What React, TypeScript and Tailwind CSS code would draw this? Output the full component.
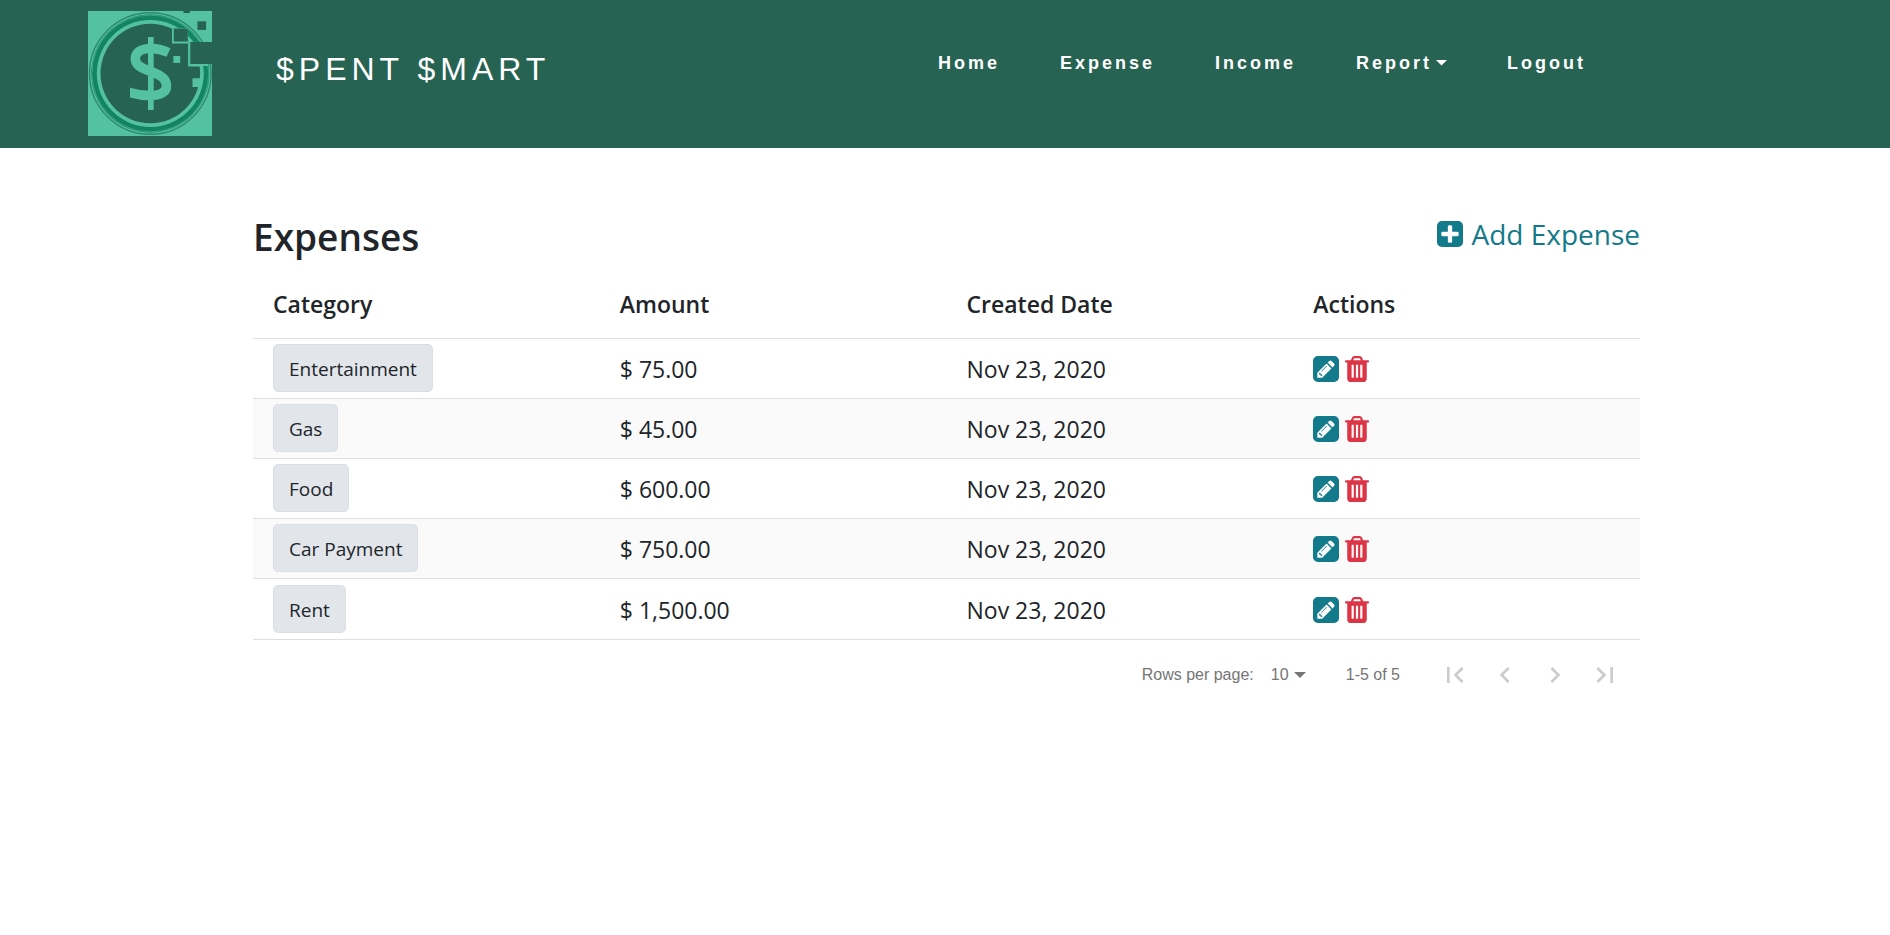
import React from "react";

const rows = [
  { category: "Entertainment", amount: "$ 75.00", date: "Nov 23, 2020" },
  { category: "Gas", amount: "$ 45.00", date: "Nov 23, 2020" },
  { category: "Food", amount: "$ 600.00", date: "Nov 23, 2020" },
  { category: "Car Payment", amount: "$ 750.00", date: "Nov 23, 2020" },
  { category: "Rent", amount: "$ 1,500.00", date: "Nov 23, 2020" },
];

const SQUARE =
  "m256-544v960q0 119-84.5 203.5t-203.5 84.5h-960q-119 0-203.5-84.5t-84.5-203.5v-960q0-119 84.5-203.5t203.5-84.5h960q119 0 203.5 84.5t84.5 203.5z";

function PlusSquare() {
  return (
    <svg viewBox="0 0 1536 1536" className="size-[26px]" fill="currentColor" aria-hidden="true">
      <path
        d={
          "M1280 832v-128q0-26-19-45t-45-19h-320v-320q0-26-19-45t-45-19h-128q-26 0-45 19t-19 45v320h-320q-26 0-45 19t-19 45v128q0 26 19 45t45 19h320v320q0 26 19 45t45 19h128q26 0 45-19t19-45v-320h320q26 0 45-19t19-45z" +
          SQUARE
        }
      />
    </svg>
  );
}

function PencilSquare() {
  return (
    <svg viewBox="0 0 1536 1536" className="size-[26px]" fill="currentColor" aria-hidden="true">
      <path d="M404 980l152 152-52 52h-56v-96h-96v-56zm414-390q14 13-3 30l-291 291q-17 17-30 3-14-13 3-30l291-291q17-17 30-3zm-274 690l544-544-288-288-544 544v288h288zm608-608l92-92q28-28 28-68t-28-68l-152-152q-28-28-68-28t-68 28l-92 92zm384-384v960q0 119-84.5 203.5t-203.5 84.5h-960q-119 0-203.5-84.5t-84.5-203.5v-960q0-119 84.5-203.5t203.5-84.5h960q119 0 203.5 84.5t84.5 203.5z" />
    </svg>
  );
}

function Trash() {
  return (
    <svg viewBox="192 128 1408 1536" className="h-[26px] w-6" fill="currentColor" aria-hidden="true">
      <path d="M704 1376v-704q0-14-9-23t-23-9h-64q-14 0-23 9t-9 23v704q0 14 9 23t23 9h64q14 0 23-9t9-23zm256 0v-704q0-14-9-23t-23-9h-64q-14 0-23 9t-9 23v704q0 14 9 23t23 9h64q14 0 23-9t9-23zm256 0v-704q0-14-9-23t-23-9h-64q-14 0-23 9t-9 23v704q0 14 9 23t23 9h64q14 0 23-9t9-23zm-544-992h448l-48-117q-7-9-17-11h-317q-10 2-17 11zm928 32v64q0 14-9 23t-23 9h-96v948q0 83-47 143.5t-113 60.5h-832q-66 0-113-58.5t-47-141.5v-952h-96q-14 0-23-9t-9-23v-64q0-14 9-23t23-9h309l70-167q15-37 54-63t79-26h320q40 0 79 26t54 63l70 167h309q14 0 23 9t9 23z" />
    </svg>
  );
}

function Logo() {
  return (
    <svg viewBox="0 0 124 125" className="h-[125px] w-[124px]" role="img" aria-label="Spent Smart logo">
      <clipPath id="coin-face">
        <rect x="42" y="20" width="44" height="84" />
      </clipPath>
      <rect width="124" height="125" fill="#54c1a1" />
      <circle cx="62.3" cy="62.5" r="60.8" fill="none" stroke="#2f8a6c" strokeWidth="1.4" />
      <circle cx="62.3" cy="62.5" r="59" fill="#12845f" />
      <circle cx="62.3" cy="62.5" r="58.4" fill="none" stroke="#3aa482" strokeWidth="1" />
      <circle cx="62.3" cy="62.5" r="53.5" fill="#54c1a1" />
      <circle cx="62.3" cy="62.5" r="49.8" fill="#276352" />
      <path
        clipPath="url(#coin-face)"
        d="M80.500 41.500C74 38.500 69 37.500 63 37.500C53 37.500 47.300 41.500 47.300 47.500C47.300 54 53 57 63 60.500C74 64.500 78.500 68.500 78.500 75C78.500 81.500 72 84.500 62 84.500C54 84.500 48 83.500 42 81.500L38 80"
        fill="none"
        stroke="#54c1a1"
        strokeWidth="9.500"
      />
      <rect x="60" y="26" width="5.700" height="73" fill="#54c1a1" />
      <path d="M84 17H100V31H120V55H101.500V32.500H84Z" fill="#54c1a1" />
      <rect x="85.800" y="17.500" width="14" height="13" fill="#276352" />
      <rect x="102.300" y="31" width="21.700" height="22" fill="#276352" />
      <path d="M101 31V54.500H114" fill="none" stroke="#54c1a1" strokeWidth="1.800" />
      <rect x="109.500" y="10.300" width="8.600" height="8.600" fill="#276352" />
      <rect x="95.500" y="0" width="6.500" height="2" fill="#276352" />
      <rect x="85.300" y="45" width="6.900" height="6.900" fill="#54c1a1" />
      <path d="M104.500 67.300H113V72L111 76H104.500Z" fill="#54c1a1" />
    </svg>
  );
}

const pagers = [
  { label: "First page", d: "M18.41 16.59L13.82 12l4.59-4.59L17 6l-6 6 6 6zM6 6h2v12H6z" },
  { label: "Previous page", d: "M15.41 7.41L14 6l-6 6 6 6 1.410-1.410L10.830 12z" },
  { label: "Next page", d: "M10 6L8.590 7.410 13.170 12l-4.580 4.590L10 18l6-6z" },
  { label: "Last page", d: "M5.590 7.410L10.180 12l-4.590 4.590L7 18l6-6-6-6zM16 6h2v12h-2z" },
];

export default function App() {
  return (
    <div className="min-h-screen bg-white font-['Open_Sans','Noto_Sans',sans-serif] text-[#212529]">
      <header className="flex h-[148px] items-start bg-[#276352] pt-[11px] pl-[88px] font-['Liberation_Sans',Arial,sans-serif] text-white">
        <Logo />
        <a href="#home" className="mt-9 ml-16 text-[32px] leading-[44px] tracking-[5px] whitespace-nowrap">
          $PENT $MART
        </a>
        <nav className="mt-10 mr-[304px] ml-auto flex gap-[60px] text-[18px] leading-6 font-bold tracking-[3px]">
          <a href="#home">Home</a>
          <a href="#expense">Expense</a>
          <a href="#income">Income</a>
          <button type="button" className="flex items-center gap-1 font-bold tracking-[3px]">
            Report
            <svg viewBox="0 0 11 6" className="h-[6px] w-[11px]" fill="currentColor" aria-hidden="true">
              <path d="M0 0H11L5.500 5.500Z" />
            </svg>
          </button>
          <a href="#logout">Logout</a>
        </nav>
      </header>

      <main className="pt-[61px] pr-[250px] pl-[253px]">
        <div className="flex items-start justify-between">
          <h1 className="text-[37px] leading-[56px] font-semibold">Expenses</h1>
          <a href="#add" className="flex items-center gap-2 text-[28px] leading-[50px] text-[#127a8a]">
            <PlusSquare />
            Add Expense
          </a>
        </div>

        <table className="mt-[6px] w-full table-fixed border-collapse text-left">
          <thead>
            <tr className="h-[67px] border-b border-[#dfdfdf] text-[23px] leading-8">
              <th className="px-5 font-semibold">Category</th>
              <th className="px-5 font-semibold">Amount</th>
              <th className="px-5 font-semibold">Created Date</th>
              <th className="px-5 font-semibold">Actions</th>
            </tr>
          </thead>
          <tbody>
            {rows.map((row) => (
              <tr
                key={row.category}
                className="h-[60px] border-b border-[#dfdfdf] text-[23px] leading-8 last:h-[61px] even:bg-[#fafafa]"
              >
                <td className="px-5">
                  <span className="flex h-12 w-fit items-center rounded-[5px] border border-[#d9dfe5] bg-[#e2e5ea] px-[15px] pt-[2px] text-[19px]">
                    {row.category}
                  </span>
                </td>
                <td className="px-5 pt-[2px]">{row.amount}</td>
                <td className="px-5 pt-[2px]">{row.date}</td>
                <td className="px-5 pt-[2px]">
                  <div className="flex items-center gap-[6px]">
                    <button type="button" aria-label={"Edit " + row.category} className="text-[#127a8a]">
                      <PencilSquare />
                    </button>
                    <button type="button" aria-label={"Delete " + row.category} className="text-[#dc3545]">
                      <Trash />
                    </button>
                  </div>
                </td>
              </tr>
            ))}
          </tbody>
        </table>

        <div className="flex h-[70px] items-center justify-end pr-[10px] font-['Liberation_Sans',Arial,sans-serif] text-base text-[#757575]">
          <label htmlFor="rows-per-page">Rows per page:</label>
          <div className="relative ml-[17px] flex items-center">
            <select id="rows-per-page" defaultValue="10" className="w-[38px] appearance-none bg-transparent">
              <option value="10">10</option>
              <option value="25">25</option>
              <option value="50">50</option>
            </select>
            <svg viewBox="0 0 12 6" className="pointer-events-none absolute right-[3px] h-[6px] w-3" fill="currentColor" aria-hidden="true">
              <path d="M0 0H12L6 6Z" />
            </svg>
          </div>
          <span className="ml-[37px]">1-5 of 5</span>
          <div className="ml-[30px] flex">
            {pagers.map((pager) => (
              <button key={pager.label} type="button" disabled aria-label={pager.label} className="flex w-[50px] justify-center text-[#cccccc]">
                <svg viewBox="0 0 24 24" className="size-8" fill="currentColor" aria-hidden="true">
                  <path d={pager.d} />
                </svg>
              </button>
            ))}
          </div>
        </div>
      </main>
    </div>
  );
}
